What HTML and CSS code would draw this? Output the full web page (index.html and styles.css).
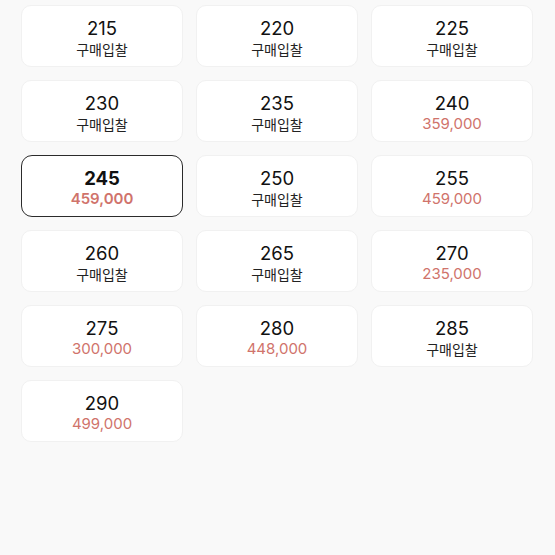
FILE: index.html
```html
<!DOCTYPE html>
<html lang="ko">
<head>
    <meta charset="UTF-8">
    <title>사이즈 선택</title>
    <meta name="viewport" content="width=device-width, initial-scale=1">
    <link rel="stylesheet" href="styles.css">
</head>
<body>
    <div class="size-grid">
        <div class="size-card"><div class="size">215</div><div class="bid">구매입찰</div></div>
        <div class="size-card"><div class="size">220</div><div class="bid">구매입찰</div></div>
        <div class="size-card"><div class="size">225</div><div class="bid">구매입찰</div></div>

        <div class="size-card"><div class="size">230</div><div class="bid">구매입찰</div></div>
        <div class="size-card"><div class="size">235</div><div class="bid">구매입찰</div></div>
        <div class="size-card"><div class="size">240</div><div class="price">359,000</div></div>

        <div class="size-card selected"><div class="size">245</div><div class="price">459,000</div></div>
        <div class="size-card"><div class="size">250</div><div class="bid">구매입찰</div></div>
        <div class="size-card"><div class="size">255</div><div class="price">459,000</div></div>

        <div class="size-card"><div class="size">260</div><div class="bid">구매입찰</div></div>
        <div class="size-card"><div class="size">265</div><div class="bid">구매입찰</div></div>
        <div class="size-card"><div class="size">270</div><div class="price">235,000</div></div>

        <div class="size-card"><div class="size">275</div><div class="price">300,000</div></div>
        <div class="size-card"><div class="size">280</div><div class="price">448,000</div></div>
        <div class="size-card"><div class="size">285</div><div class="bid">구매입찰</div></div>

        <div class="size-card"><div class="size">290</div><div class="price">499,000</div></div>
    </div>
</body>
</html>
```

FILE: styles.css
```css
body {
    margin: 0;
    background: #f9f9f9;
    font-family: Inter, "Noto Sans CJK KR", sans-serif;
    color: #111;
}

.size-grid {
    display: grid;
    grid-template-columns: repeat(3, 1fr);
    gap: 13px;
    padding: 5px 22px 0 21px;
}

.size-card {
    height: 62px;
    box-sizing: border-box;
    padding-top: 3px;
    background: #fff;
    border: 1px solid #f1f1f1;
    border-radius: 10px;
    display: flex;
    flex-direction: column;
    align-items: center;
    justify-content: center;
}

.size-card.selected {
    border: 1.5px solid #2b2b2b;
    border-radius: 11px;
}

.size {
    font-size: 18.5px;
    line-height: 22px;
}

.selected .size {
    font-weight: 700;
}

.bid {
    font-family: "Noto Sans CJK KR", sans-serif;
    font-size: 14px;
    line-height: 20px;
    color: #222;
}

.price {
    font-size: 15px;
    line-height: 20px;
    color: #d0736b;
}

.selected .price {
    font-weight: 600;
}
```
